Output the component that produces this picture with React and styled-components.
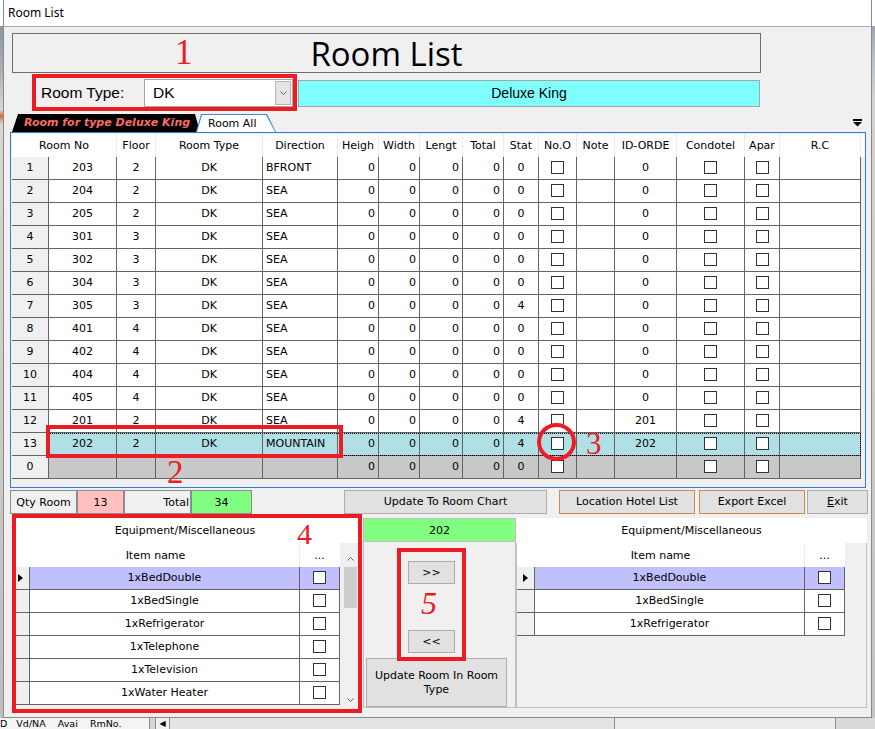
import React from "react";
import styled, { createGlobalStyle } from "styled-components";

const GlobalStyle = createGlobalStyle`
  * { box-sizing: border-box; }
  html, body { margin: 0; padding: 0; background: #c8c8c8; }
  body {
    font-family: "DejaVu Sans", Verdana, sans-serif;
    font-size: 11px;
    color: #000;
  }
`;

const MAIN_COLS = "37px 68px 39px 107px 75px 41px 41px 43px 41px 35px 38px 38px 62px 68px 35px 81px";
const SUB_COLS = "18px 270px 40px";

const Screen = styled.div`
  position: relative;
  width: 875px;
  height: 729px;
  overflow: hidden;
  display: flex;
  flex-direction: column;
  background: #cfcfcf;
`;

const TopArea = styled.div`
  display: flex;
  height: 718px;
`;

const EdgeStrip = styled.div`
  width: 3px;
  background: ${(p) =>
    p.$right
      ? "linear-gradient(to bottom, #ffffff 0, #ffffff 26px, #9aa6b0 26px, #b9c3c9 60px, #d2d2d2 100px, #c4c4c4 100%)"
      : "linear-gradient(to bottom, #ffffff 0, #ffffff 26px, #8b96a0 26px, #a8b0b6 70px, #d6d6d6 110px, #d86b2c 116px, #d6d6d6 124px, #bdbdbd 100%)"};
`;

const Window = styled.div`
  width: 869px;
  display: flex;
  flex-direction: column;
  border: 1px solid #8a8a8a;
  border-top: none;
  background: #f0f0f0;
`;

const TitleBar = styled.div`
  height: 27px;
  background: #fff;
  border-bottom: 1px solid #aaaaaa;
  padding-left: 4px;
  font-family: "Noto Sans", "Open Sans", sans-serif;
  font-size: 12px;
  line-height: 25px;
`;

const Body = styled.div`
  flex: 1;
  display: flex;
  flex-direction: column;
  background: #f0f0f0;
`;

const TitlePanel = styled.div`
  margin: 6px 0 0 8px;
  width: 749px;
  height: 40px;
  border: 1px solid #6d6d6d;
  display: flex;
  align-items: center;
  justify-content: center;
  font-family: "Open Sans", "Noto Sans", sans-serif;
  font-size: 33px;
  line-height: 33px;
`;

const TypeRow = styled.div`
  margin: 6px 0 0 37px;
  height: 28px;
  display: flex;
  align-items: center;
`;

const TypeLabel = styled.div`
  width: 103px;
  font-family: "Liberation Sans", Arial, sans-serif;
  font-size: 15.5px;
`;

const Combo = styled.div`
  width: 149px;
  height: 28px;
  background: #fff;
  border: 1px solid #a5a5a5;
  display: flex;
  align-items: center;
  padding-left: 8px;
  font-family: "Liberation Sans", Arial, sans-serif;
  font-size: 15.5px;
`;

const ComboButton = styled.div`
  margin-left: auto;
  margin-right: 1px;
  width: 16px;
  height: 24px;
  background: #e5e5e5;
  border: 1px solid #b5b5b5;
  display: flex;
  align-items: center;
  justify-content: center;
`;

const TypeName = styled.div`
  margin-left: 5px;
  width: 462px;
  height: 27px;
  background: #80ffff;
  border: 1px solid #a5a5a5;
  display: flex;
  align-items: center;
  justify-content: center;
  font-family: "Liberation Sans", Arial, sans-serif;
  font-size: 14px;
`;

const TabStrip = styled.div`
  margin: 6px 0 0 8px;
  height: 19px;
  display: flex;
  align-items: flex-end;
  padding-right: 9px;
`;

const ActiveTab = styled.div`
  width: 188px;
  height: 18px;
  background: #000;
  clip-path: polygon(6px 0, calc(100% - 5px) 0, 100% 100%, 0 100%);
  color: #ff6b6b;
  font-weight: bold;
  font-style: italic;
  font-size: 11px;
  line-height: 18px;
  padding-left: 12px;
  white-space: nowrap;
`;

const InactiveTab = styled.div`
  margin-left: -4px;
  width: 80px;
  height: 18px;
  background: #3a8ee6;
  clip-path: polygon(0 100%, 5px 0, calc(100% - 9px) 0, 100% 100%);
  padding: 1px 1px 0 1px;
`;

const InactiveFace = styled.div`
  height: 17px;
  background: #fff;
  clip-path: polygon(0 100%, 5px 0, calc(100% - 9px) 0, 100% 100%);
  padding-left: 11px;
  line-height: 17px;
  white-space: nowrap;
`;

const TabMenu = styled.div`
  margin-left: auto;
  align-self: center;
  display: flex;
`;

const GridBox = styled.div`
  margin-left: 6px;
  width: 856px;
  height: 356px;
  border: 1px solid #2a7fd4;
  background: #f0f0f0;
  padding: 1px 0 0 1px;
  overflow: hidden;
`;

const HeadRow = styled.div`
  display: grid;
  grid-template-columns: ${(p) => p.$cols};
  background: #fff;
`;

const HeadCell = styled.div`
  height: ${(p) => p.$h || 23}px;
  border-right: 1px solid ${(p) => (p.$last ? "transparent" : "#ececec")};
  display: flex;
  align-items: center;
  justify-content: center;
  white-space: nowrap;
  overflow: hidden;
  grid-column: ${(p) => (p.$span ? `span ${p.$span}` : "auto")};
`;

const Row = styled.div`
  position: relative;
  display: grid;
  grid-template-columns: ${(p) => p.$cols};
  width: max-content;

  &::after {
    content: "";
    display: ${(p) => (p.$focus ? "block" : "none")};
    position: absolute;
    left: ${(p) => p.$focusLeft || 0}px;
    right: 0;
    top: 0;
    bottom: 0;
    border: 1px dotted #000;
    pointer-events: none;
  }
`;

const Cell = styled.div`
  height: 23px;
  border-right: 1px solid #646464;
  border-bottom: 1px solid #646464;
  background: ${(p) => p.$bg || "#fff"};
  display: flex;
  align-items: center;
  justify-content: ${(p) =>
    p.$align === "left" ? "flex-start" : p.$align === "right" ? "flex-end" : "center"};
  padding: 0 3px 1px;
  white-space: nowrap;
  overflow: hidden;
`;

const Check = styled.span`
  display: block;
  width: 13px;
  height: 13px;
  border: 1px solid #333;
  background: #fff;
`;

const BottomBar = styled.div`
  margin: 2px 0 0 6px;
  height: 24px;
  display: flex;
`;

const InfoBox = styled.div`
  width: ${(p) => p.$w}px;
  height: 24px;
  background: ${(p) => p.$bg || "#f0f0f0"};
  border: 1px solid #8c8c8c;
  display: flex;
  align-items: center;
  justify-content: ${(p) => (p.$right ? "flex-end" : "center")};
  padding: 0 1px;
  white-space: nowrap;
`;

const Button = styled.button`
  width: ${(p) => p.$w}px;
  height: ${(p) => p.$h || 24}px;
  margin-left: ${(p) => p.$ml || 0}px;
  margin-top: ${(p) => p.$mt || 0}px;
  background: #e1e1e1;
  border: 1px solid ${(p) => (p.$accent ? "#d08a4e" : "#adadad")};
  border-radius: 0;
  font-family: "DejaVu Sans", Verdana, sans-serif;
  font-size: 11px;
  line-height: 14px;
  color: #000;
  padding: 0;
  flex-shrink: 0;
`;

const Lower = styled.div`
  margin-top: 4px;
  height: 190px;
  display: flex;
`;

const LeftPanel = styled.div`
  margin-left: 8px;
  width: 346px;
  display: flex;
  flex-direction: column;
`;

const PanelTitle = styled.div`
  height: 25px;
  background: #fff;
  display: flex;
  align-items: center;
  justify-content: center;
`;

const LeftBody = styled.div`
  flex: 1;
  display: flex;
  overflow: hidden;
`;

const SubGrid = styled.div`
  width: 328px;
  display: flex;
  flex-direction: column;
  overflow: hidden;
`;

const ScrollBar = styled.div`
  margin: 7px 0 0 3px;
  width: 15px;
  display: flex;
  flex-direction: column;
  background: #f0f0f0;
`;

const ScrollArrow = styled.div`
  height: 17px;
  display: flex;
  align-items: center;
  justify-content: center;
  margin-top: ${(p) => (p.$bottom ? "auto" : "0")};
`;

const ScrollThumb = styled.div`
  height: 41px;
  margin: 0 1px;
  background: #cdcdcd;
`;

const MidPanel = styled.div`
  margin-left: 5px;
  width: 153px;
  display: flex;
  flex-direction: column;
`;

const GreenBar = styled.div`
  height: 24px;
  background: #80ff80;
  border: 1px solid #c0c0c0;
  display: flex;
  align-items: center;
  justify-content: center;
`;

const MidBody = styled.div`
  flex: 1;
  border: 1px solid #c0c0c0;
  border-top: none;
  display: flex;
  flex-direction: column;
`;

const RightPanel = styled.div`
  width: 351px;
  display: flex;
  flex-direction: column;
`;

const RightBody = styled.div`
  flex: 1;
  border: 1px solid #c0c0c0;
  border-top: none;
  overflow: hidden;
`;

const RowMark = styled.div`
  width: 0;
  height: 0;
  border-top: 4px solid transparent;
  border-bottom: 4px solid transparent;
  border-left: 5px solid #000;
`;

const TaskStrip = styled.div`
  height: 11px;
  display: flex;
  background: #e4e4e4;
  overflow: hidden;
  font-size: 9.5px;
  line-height: 11px;
`;

const TaskText = styled.div`
  width: 150px;
  background: #f4f4f4;
  white-space: pre;
`;

const TaskSep = styled.div`
  width: ${(p) => p.$w}px;
  border-left: 1px solid #8c8c8c;
  background: ${(p) => p.$bg || "#e4e4e4"};
  display: flex;
  justify-content: center;
  font-size: 8px;
`;

const RedBox = styled.div`
  position: absolute;
  left: ${(p) => p.$x}px;
  top: ${(p) => p.$y}px;
  width: ${(p) => p.$w}px;
  height: ${(p) => p.$h}px;
  border: 4px solid #ed1c24;
  border-radius: ${(p) => (p.$round ? "50%" : "0")};
  pointer-events: none;
`;

const RedMark = styled.div`
  position: absolute;
  left: ${(p) => p.$x}px;
  top: ${(p) => p.$y}px;
  font-family: "Liberation Serif", "Times New Roman", serif;
  font-size: ${(p) => p.$size}px;
  line-height: ${(p) => p.$size}px;
  font-style: ${(p) => (p.$italic ? "italic" : "normal")};
  color: #ed1c24;
  pointer-events: none;
`;

const Chevron = ({ up }) => (
  <svg width="7" height="4" viewBox="0 0 7 4">
    <path
      d={up ? "M0.5 3.5 L3.5 0.5 L6.5 3.5" : "M0.5 0.5 L3.5 3.5 L6.5 0.5"}
      fill="none"
      stroke="#606060"
      strokeWidth="1"
    />
  </svg>
);

const MenuGlyph = () => (
  <svg width="9" height="8" viewBox="0 0 9 8">
    <rect x="0" y="0" width="9" height="2" fill="#000" />
    <path d="M0 3 L9 3 L4.5 7.5 Z" fill="#000" />
  </svg>
);

const headers = ["Floor", "Room Type", "Direction", "Heigh", "Width", "Lengt", "Total", "Stat", "No.O", "Note", "ID-ORDE", "Condotel", "Apar", "R.C"];

const rooms = [
  [1, 203, 2, "BFRONT", 0, 0],
  [2, 204, 2, "SEA", 0, 0],
  [3, 205, 2, "SEA", 0, 0],
  [4, 301, 3, "SEA", 0, 0],
  [5, 302, 3, "SEA", 0, 0],
  [6, 304, 3, "SEA", 0, 0],
  [7, 305, 3, "SEA", 4, 0],
  [8, 401, 4, "SEA", 0, 0],
  [9, 402, 4, "SEA", 0, 0],
  [10, 404, 4, "SEA", 0, 0],
  [11, 405, 4, "SEA", 0, 0],
  [12, 201, 2, "SEA", 4, 201],
  [13, 202, 2, "MOUNTAIN", 4, 202],
];

const leftItems = ["1xBedDouble", "1xBedSingle", "1xRefrigerator", "1xTelephone", "1xTelevision", "1xWater Heater"];
const rightItems = ["1xBedDouble", "1xBedSingle", "1xRefrigerator"];

function RoomRow({ r, selected }) {
  const bg = selected ? "#b0e0e6" : "#fff";
  const [no, roomNo, floor, dir, stat, id] = r;
  return (
    <Row $cols={MAIN_COLS} $focus={selected} $focusLeft={37}>
      <Cell $bg="#f0f0f0">{no}</Cell>
      <Cell $bg={bg}>{roomNo}</Cell>
      <Cell $bg={bg}>{floor}</Cell>
      <Cell $bg={bg}>DK</Cell>
      <Cell $bg={bg} $align="left">{dir}</Cell>
      <Cell $bg={bg} $align="right">0</Cell>
      <Cell $bg={bg} $align="right">0</Cell>
      <Cell $bg={bg} $align="right">0</Cell>
      <Cell $bg={bg} $align="right">0</Cell>
      <Cell $bg={bg}>{stat}</Cell>
      <Cell $bg={bg}><Check /></Cell>
      <Cell $bg={bg} />
      <Cell $bg={bg}>{id}</Cell>
      <Cell $bg={bg}><Check /></Cell>
      <Cell $bg={bg}><Check /></Cell>
      <Cell $bg={bg} />
    </Row>
  );
}

function NewRow() {
  const bg = "#c8c8c8";
  return (
    <Row $cols={MAIN_COLS}>
      <Cell $bg="#f0f0f0">0</Cell>
      <Cell $bg={bg} />
      <Cell $bg={bg} />
      <Cell $bg={bg} />
      <Cell $bg={bg} />
      <Cell $bg={bg} $align="right">0</Cell>
      <Cell $bg={bg} $align="right">0</Cell>
      <Cell $bg={bg} $align="right">0</Cell>
      <Cell $bg={bg} $align="right">0</Cell>
      <Cell $bg={bg}>0</Cell>
      <Cell $bg={bg}><Check /></Cell>
      <Cell $bg={bg} />
      <Cell $bg={bg} />
      <Cell $bg={bg}><Check /></Cell>
      <Cell $bg={bg}><Check /></Cell>
      <Cell $bg={bg} />
    </Row>
  );
}

function ItemGrid({ items }) {
  return (
    <SubGrid>
      <HeadRow $cols={SUB_COLS}>
        <HeadCell $h={24} $span={2}>Item name</HeadCell>
        <HeadCell $h={24} $last>...</HeadCell>
      </HeadRow>
      {items.map((name, i) => {
        const bg = i === 0 ? "#c0c0ff" : "#fff";
        return (
          <Row key={name} $cols={SUB_COLS}>
            <Cell $bg="#f0f0f0">{i === 0 && <RowMark />}</Cell>
            <Cell $bg={bg}>{name}</Cell>
            <Cell $bg={bg}><Check /></Cell>
          </Row>
        );
      })}
    </SubGrid>
  );
}

export default function App() {
  return (
    <>
      <GlobalStyle />
      <Screen>
        <TopArea>
          <EdgeStrip />
          <Window>
            <TitleBar>Room List</TitleBar>
            <Body>
              <TitlePanel>Room List</TitlePanel>

              <TypeRow>
                <TypeLabel>Room Type:</TypeLabel>
                <Combo>
                  DK
                  <ComboButton>
                    <Chevron />
                  </ComboButton>
                </Combo>
                <TypeName>Deluxe King</TypeName>
              </TypeRow>

              <TabStrip>
                <ActiveTab>Room for type Deluxe King</ActiveTab>
                <InactiveTab>
                  <InactiveFace>Room All</InactiveFace>
                </InactiveTab>
                <TabMenu>
                  <MenuGlyph />
                </TabMenu>
              </TabStrip>

              <GridBox>
                <HeadRow $cols={MAIN_COLS}>
                  <HeadCell $span={2}>Room No</HeadCell>
                  {headers.map((h) => (
                    <HeadCell key={h}>{h}</HeadCell>
                  ))}
                </HeadRow>
                {rooms.map((r) => (
                  <RoomRow key={r[0]} r={r} selected={r[0] === 13} />
                ))}
                <NewRow />
              </GridBox>

              <BottomBar>
                <InfoBox $w={67}>Qty Room</InfoBox>
                <InfoBox $w={47} $bg="#ffc0c0">13</InfoBox>
                <InfoBox $w={67} $right>Total</InfoBox>
                <InfoBox $w={61} $bg="#80ff80">34</InfoBox>
                <Button $w={203} $ml={92}>Update To Room Chart</Button>
                <Button $w={136} $ml={12} $accent>Location Hotel List</Button>
                <Button $w={106} $ml={4} $accent>Export Excel</Button>
                <Button $w={61} $ml={2}>
                  <u>E</u>xit
                </Button>
              </BottomBar>

              <Lower>
                <LeftPanel>
                  <PanelTitle>Equipment/Miscellaneous</PanelTitle>
                  <LeftBody>
                    <ItemGrid items={leftItems} />
                    <ScrollBar>
                      <ScrollArrow>
                        <Chevron up />
                      </ScrollArrow>
                      <ScrollThumb />
                      <ScrollArrow $bottom>
                        <Chevron />
                      </ScrollArrow>
                    </ScrollBar>
                  </LeftBody>
                </LeftPanel>

                <MidPanel>
                  <GreenBar>202</GreenBar>
                  <MidBody>
                    <Button $w={47} $h={23} $ml={44} $mt={19}>&gt;&gt;</Button>
                    <Button $w={47} $h={23} $ml={44} $mt={46}>&lt;&lt;</Button>
                    <Button $w={141} $h={49} $ml={2} $mt={5}>
                      Update Room In Room
                      <br />
                      Type
                    </Button>
                  </MidBody>
                </MidPanel>

                <RightPanel>
                  <PanelTitle>Equipment/Miscellaneous</PanelTitle>
                  <RightBody>
                    <ItemGrid items={rightItems} />
                  </RightBody>
                </RightPanel>
              </Lower>
            </Body>
          </Window>
          <EdgeStrip $right />
        </TopArea>

        <TaskStrip>
          <TaskText>{"D   Vd/NA    Avai    RmNo."}</TaskText>
          <TaskSep $w={6} $bg="#d6d6d6" />
          <TaskSep $w={14} $bg="#f0f0f0">◀</TaskSep>
          <TaskSep $w={448} />
          <TaskSep $w={222} $bg="#ececec" />
          <TaskSep $w={40} $bg="#d9d9d9" />
        </TaskStrip>

        <RedBox $x={32} $y={74} $w={265} $h={37} />
        <RedMark $x={175} $y={35} $size={35}>1</RedMark>
        <RedBox $x={46} $y={425} $w={297} $h={33} />
        <RedMark $x={167} $y={456} $size={33}>2</RedMark>
        <RedBox $x={537} $y={423} $w={39} $h={38} $round />
        <RedMark $x={586} $y={428} $size={31}>3</RedMark>
        <RedBox $x={12} $y={514} $w={350} $h={199} />
        <RedMark $x={297} $y={519} $size={30}>4</RedMark>
        <RedBox $x={397} $y={548} $w={69} $h={113} />
        <RedMark $x={421} $y={587} $size={32} $italic>5</RedMark>
      </Screen>
    </>
  );
}
